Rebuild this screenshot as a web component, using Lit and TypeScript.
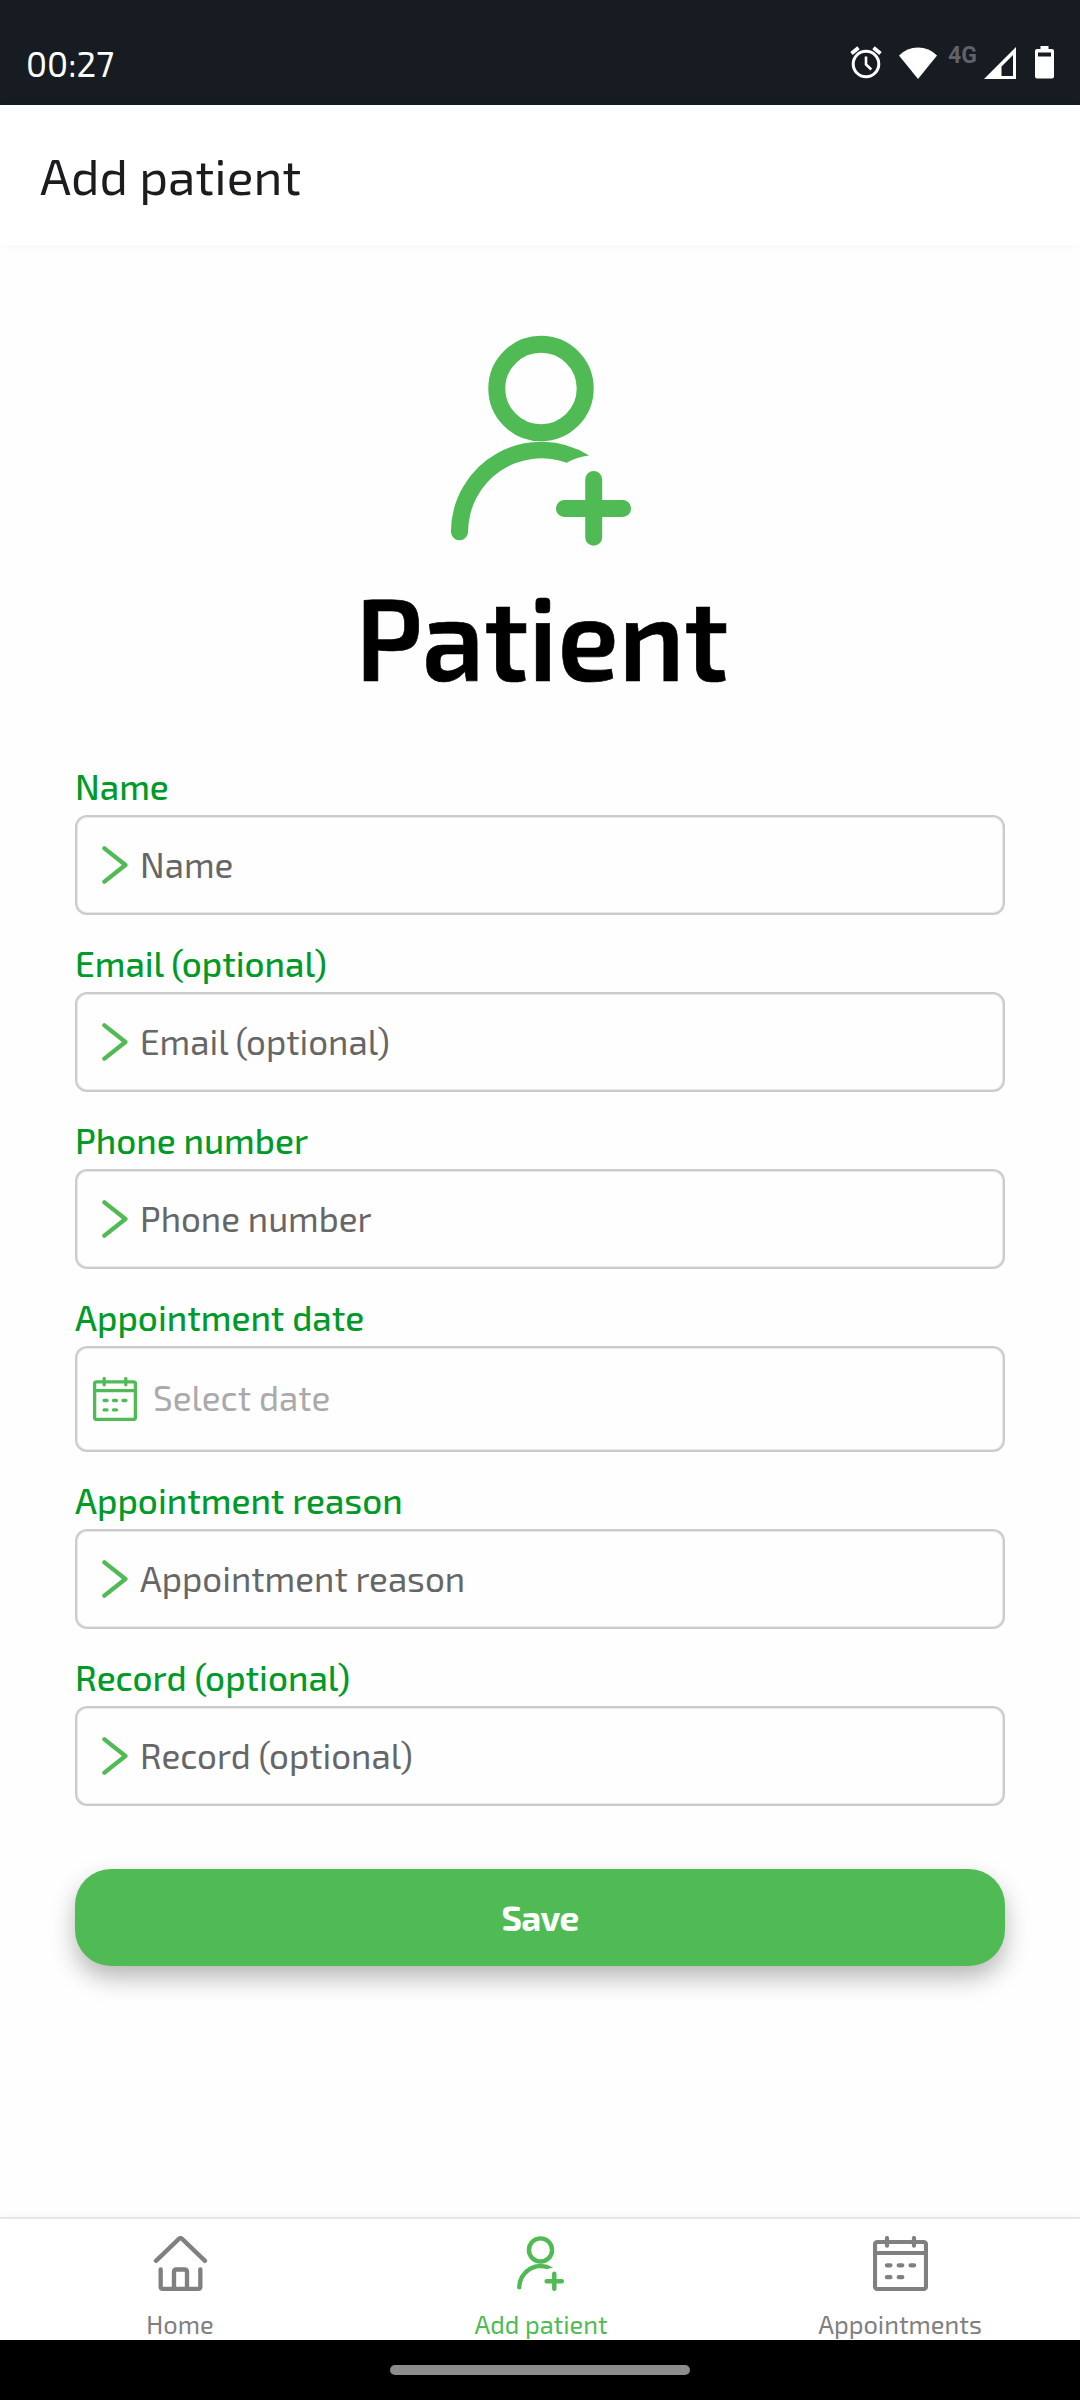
import { LitElement, html, css } from "lit";

const patientIcon = html`<svg viewBox="96 25.4 210 210.4" fill="currentColor">
  <circle cx="201" cy="78.6" r="44.2" fill="none" stroke="currentColor" stroke-width="17"></circle>
  <path d="M110.9 221.7A90.3 90.3 0 0 1 249 145.6Q237 147 226.7 152.8A73.6 73.6 0 0 0 128.1 221.7A8.6 8.6 0 0 1 110.9 221.7Z"></path>
  <path d="M253.7 169.6V227.4M224.4 198.5H282.6" stroke="currentColor" stroke-width="17" stroke-linecap="round"></path>
</svg>`;

const calendarIcon = html`<svg viewBox="459 138 165 165" fill="none" stroke="currentColor" stroke-width="12.5">
  <rect x="465" y="156" width="153" height="141" rx="7"></rect>
  <path d="M465 189H618"></path>
  <path stroke-linecap="round" d="M501 144V167M582 144V167M500.5 226H511.5M536 226H547M571.5 226H582.5M500.5 261.5H511.5M536 261.5H547"></path>
</svg>`;

const homeIcon = html`<svg viewBox="459 138 165 165" fill="none" stroke="currentColor" stroke-width="13" stroke-linecap="round" stroke-linejoin="round">
  <path d="M468 212.5L537.5 146Q541.5 142.5 545.5 146L615 212.5"></path>
  <path d="M482 238V289.5Q482 296.5 489 296.5H594Q601 296.5 601 289.5V238"></path>
  <path d="M522 296V246Q522 238.5 529.5 238.5H553.5Q561 238.5 561 246V296"></path>
</svg>`;

const chevronIcon = html`<svg class="chevron" viewBox="0 0 26 38" fill="none" stroke="currentColor" stroke-width="4.3" stroke-linecap="round" stroke-linejoin="round">
  <path d="M2.4 2.4L23.4 19L2.4 35.6"></path>
</svg>`;

const alarmIcon = html`<svg width="32" height="33" viewBox="0 0 32 33" fill="none" stroke="#fff">
  <circle cx="16" cy="18" r="12.8" stroke-width="3"></circle>
  <path stroke-width="3.8" d="M1.5 7.5L8.5 1.8M30.5 7.5L23.5 1.8"></path>
  <path stroke-width="2.6" d="M16 10.5V18.5L21.3 23.5"></path>
</svg>`;

const wifiIcon = html`<svg width="38" height="32" viewBox="0 0 38 32"><path fill="#fff" d="M0 8.5Q8 .5 19 .5T38 8.5L19 32Z"></path></svg>`;

const signalIcon = html`<svg width="32" height="32" viewBox="0 0 32 32"><path fill="#fff" fill-rule="evenodd" d="M32 0V32H0ZM29 8L17.5 19.5V29H29Z"></path></svg>`;

const batteryIcon = html`<svg width="19" height="33" viewBox="0 0 19 33"><path fill="#fff" fill-rule="evenodd" d="M5.5 0H13.5V3H17Q19 3 19 5V30.5Q19 32.5 17 32.5H2Q0 32.5 0 30.5V5Q0 3 2 3H5.5ZM3 6.5V10.5H16V6.5Z"></path></svg>`;

interface Field {
  label: string;
  placeholder: string;
  kind: "text" | "date";
}

const fields: Field[] = [
  { label: "Name", placeholder: "Name", kind: "text" },
  { label: "Email (optional)", placeholder: "Email (optional)", kind: "text" },
  { label: "Phone number", placeholder: "Phone number", kind: "text" },
  { label: "Appointment date", placeholder: "Select date", kind: "date" },
  { label: "Appointment reason", placeholder: "Appointment reason", kind: "text" },
  { label: "Record (optional)", placeholder: "Record (optional)", kind: "text" },
];

const tabs = [
  { label: "Home", icon: homeIcon, active: false },
  { label: "Add patient", icon: patientIcon, active: true },
  { label: "Appointments", icon: calendarIcon, active: false },
];

class AppRoot extends LitElement {
  static styles = css`
    :host {
      display: flex;
      flex-direction: column;
      width: 1080px;
      height: 2400px;
      background: #fefefe;
      font-family: "Exo 2", Roboto, "Open Sans", sans-serif;
      overflow: hidden;
    }
    svg { display: block; flex: none; }
    .status {
      flex: none;
      box-sizing: border-box;
      height: 105px;
      padding: 20px 26px 0;
      display: flex;
      align-items: center;
      justify-content: space-between;
      background: #171b22;
      color: #fff;
      font-size: 35px;
    }
    .indicators { display: flex; align-items: center; }
    .network {
      width: 30px;
      margin: 0 6px 14px 11px;
      font: 700 23px/24px Roboto, sans-serif;
      color: #5f6266;
    }
    .signal { margin-right: 19px; }
    .alarm { margin-right: 17px; }
    .appbar {
      flex: none;
      height: 140px;
      padding-left: 40px;
      display: flex;
      align-items: center;
      background: #fff;
      box-shadow: 0 0 10px rgba(0, 0, 0, 0.045);
      color: #1c1c1e;
      font-size: 49.8px;
    }
    main {
      flex: 1;
      display: flex;
      flex-direction: column;
      padding: 90px 75px 0;
    }
    .hero {
      display: flex;
      flex-direction: column;
      align-items: center;
      color: #50bb54;
    }
    .hero svg { width: 210px; height: 211px; margin-left: 2px; }
    h1 {
      margin: 23px 0 0 4px;
      height: 132px;
      line-height: 132px;
      font-size: 117px;
      font-weight: 600;
      -webkit-text-stroke: 0.7px #000;
      transform: scaleX(0.947);
      color: #000;
    }
    form {
      margin: 65px 0 0;
      display: flex;
      flex-direction: column;
      gap: 28px;
    }
    .label {
      display: block;
      height: 49px;
      line-height: 40px;
      font-size: 35px;
      font-weight: 500;
      color: #009a29;
    }
    .input {
      box-sizing: border-box;
      height: 100px;
      border: 2px solid #cbcbcb;
      border-radius: 12px;
      box-shadow: inset 0 0 0 1px #e8e8e8;
      padding-left: 25px;
      display: flex;
      align-items: center;
      gap: 12px;
      color: #666;
      font-size: 35px;
    }
    .input span { padding-bottom: 2px; }
    .input svg { color: #50bb54; }
    .chevron { width: 26px; height: 38px; }
    .input.date {
      height: 106px;
      padding-left: 16px;
      gap: 16px;
      color: #aaa;
    }
    .date span { padding-bottom: 4px; }
    .date svg { width: 44px; height: 44px; }
    .save {
      margin: 35px 0 0;
      padding: 0 0 1px;
      height: 97px;
      border: 0;
      border-radius: 36px;
      background: #50bb54;
      box-shadow: 0 12px 25px rgba(0, 0, 0, 0.28);
      color: #fff;
      font: 700 35px "Exo 2", Roboto, sans-serif;
      letter-spacing: -0.6px;
    }
    nav {
      flex: none;
      box-sizing: border-box;
      height: 123px;
      border-top: 2px solid #e6e6e6;
      box-shadow: 0 -2px 8px rgba(0, 0, 0, 0.03);
      display: grid;
      grid-template-columns: repeat(3, 1fr);
      background: #fff;
    }
    .tab {
      display: flex;
      flex-direction: column;
      align-items: center;
      padding-top: 17px;
      color: #808080;
      font-size: 25.4px;
      line-height: 30px;
    }
    .tab svg { width: 55px; height: 55px; margin: 0 0 18px 1px; }
    .tab.active { color: #50bb54; }
    .tab.active span { padding-left: 2px; }
    .gesture {
      flex: none;
      height: 60px;
      display: flex;
      align-items: center;
      justify-content: center;
      background: #000;
    }
    .pill { width: 300px; height: 10px; border-radius: 5px; background: #8d8d8d; }
  `;

  private renderField(field: Field) {
    return html`<label>
      <span class="label">${field.label}</span>
      <div class="input ${field.kind}">
        ${field.kind === "date" ? calendarIcon : chevronIcon}
        <span>${field.placeholder}</span>
      </div>
    </label>`;
  }

  render() {
    return html`
      <header class="status">
        <span>00:27</span>
        <div class="indicators">
          <span class="alarm">${alarmIcon}</span>${wifiIcon}
          <span class="network">4G</span>
          <span class="signal">${signalIcon}</span>${batteryIcon}
        </div>
      </header>
      <div class="appbar"><span>Add patient</span></div>
      <main>
        <div class="hero">${patientIcon}<h1>Patient</h1></div>
        <form>
          ${fields.map((f) => this.renderField(f))}
          <button class="save" type="button">Save</button>
        </form>
      </main>
      <nav>
        ${tabs.map((t) => html`<div class="tab ${t.active ? "active" : ""}">${t.icon}<span>${t.label}</span></div>`)}
      </nav>
      <div class="gesture"><div class="pill"></div></div>
    `;
  }
}
customElements.define("app-root", AppRoot);
